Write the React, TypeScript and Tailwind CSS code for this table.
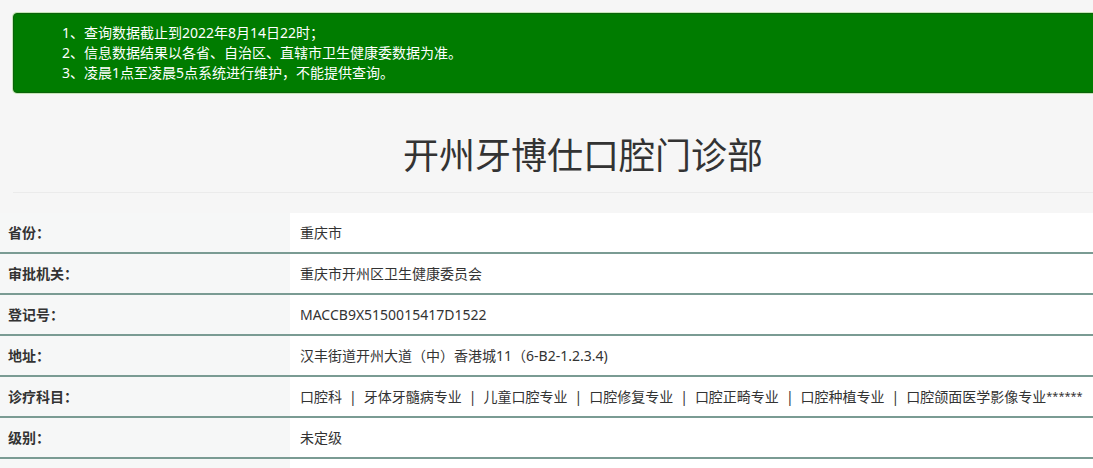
import React from "react";

const Sep = () => <span className="mx-[7px]">|</span>;

const rows: { label: string; value: React.ReactNode }[] = [
  { label: "省份：", value: "重庆市" },
  { label: "审批机关：", value: "重庆市开州区卫生健康委员会" },
  { label: "登记号：", value: "MACCB9X5150015417D1522" },
  { label: "地址：", value: "汉丰街道开州大道（中）香港城11（6-B2-1.2.3.4)" },
  {
    label: "诊疗科目：",
    value: (
      <>
        口腔科<Sep />牙体牙髓病专业<Sep />儿童口腔专业<Sep />口腔修复专业<Sep />口腔正畸专业<Sep />口腔种植专业<Sep />口腔颌面医学影像专业
        <span className="text-[11px]">******</span>
      </>
    ),
  },
  { label: "级别：", value: "未定级" },
  { label: "", value: "" },
];

export default function App() {
  return (
    <div
      className="w-screen h-screen overflow-hidden bg-[#f6f6f6] text-[#333]"
      style={{ fontFamily: '"Noto Sans", "Noto Sans CJK SC", sans-serif' }}
    >
      <div className="w-[1166px] pt-[13px]">
        <div className="ml-[13px] h-[80px] box-border rounded-l-[4px] border border-[#0b620b] bg-[#007c00] shadow-[0_0_0_1px_#c4e6b6] pl-[48px] py-[9px] text-[14px] leading-[20px] text-white">
          <div>1、查询数据截止到2022年8月14日22时；</div>
          <div>2、信息数据结果以各省、自治区、直辖市卫生健康委数据为准。</div>
          <div>3、凌晨1点至凌晨5点系统进行维护，不能提供查询。</div>
        </div>

        <h1 className="mt-[43px] text-center text-[36px] leading-[40px] font-normal text-[#333]">
          开州牙博仕口腔门诊部
        </h1>

        <div className="ml-[13px] mt-[16px] h-px bg-[#ebebeb]" />

        <div className="mt-[20px]">
          {rows.map((r, i) => (
            <div
              key={i}
              className="grid grid-cols-[290px_1fr] border-b-2 border-[#7a9b93]"
            >
              <div className="h-[39px] flex items-center pl-2 bg-[#f6f7f7] text-[14px] font-bold text-[#333]">
                {r.label}
              </div>
              <div className="h-[39px] flex items-center pl-[10px] bg-white text-[14px] text-[#333] whitespace-nowrap">
                {r.value}
              </div>
            </div>
          ))}
        </div>
      </div>
    </div>
  );
}
